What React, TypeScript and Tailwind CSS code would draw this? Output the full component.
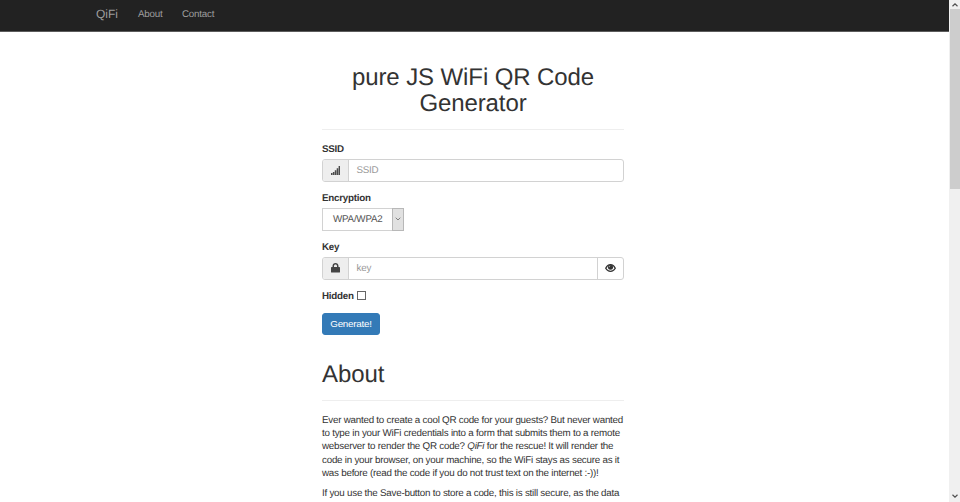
import React from "react";

const Signal = () => (
  <svg viewBox="0 0 9 9" className="h-[9px] w-[9px]" fill="#4a4a4a">
    <path d="M0 7h1.500v2H0zM1.900 6h1.500v3H1.900zM3.800 4.300h1.500v4.700H3.800zM5.700 2.300h1.500v6.700H5.700zM7.600 0H9v9H7.600z" />
  </svg>
);

const Lock = () => (
  <svg viewBox="0 0 9 10" className="h-[10px] w-[9px]" fill="#444">
    <path
      fillRule="evenodd"
      d="M1.500 4V3.100C1.500 1.200 2.800.1 4.500.1s3 1.100 3 3V4h.8c.4 0 .7.3.7.700v4.200c0 .3-.3.600-.6.600H.6C.3 9.500 0 9.200 0 8.900V4.700C0 4.300.3 4 .7 4zM3 4h3V3.200C6 2.200 5.400 1.600 4.500 1.600S3 2.200 3 3.200z"
    />
  </svg>
);

const Eye = () => (
  <svg viewBox="0 0 16 12" className="h-[8px] w-[11px]">
    <path d="M.8 6.300C2.400 3 5 1.100 8 1.100s5.600 1.900 7.200 5.200C13.400 9.400 11 11 8 11S2.600 9.400.8 6.300z" fill="#fff" stroke="#333" strokeWidth="1.900" />
    <circle cx="8" cy="5" r="3.800" fill="#333" />
    <path d="M6 4.800c0-1.100.6-1.800 1.600-1.900" fill="none" stroke="#ddd" strokeWidth="1" />
  </svg>
);

const Label = ({ children }: { children: React.ReactNode }) => (
  <div className="h-[13.33px] font-bold leading-[13.33px]">{children}</div>
);

export default function App() {
  return (
    <div className="flex h-[502px] overflow-hidden bg-white font-['Liberation_Sans',Arial,sans-serif] text-[9.8px] leading-[13.33px] tracking-[-0.235px] text-[#333] [text-rendering:geometricPrecision]">
      <div className="flex min-w-0 flex-1 flex-col">
        <nav className="flex h-[32px] shrink-0 items-center border-b border-[#5c5c5c] bg-[#222] pb-[2px] pl-[96px] text-[#9d9d9d]">
          <span className="w-[42px] text-[12px] tracking-normal">QiFi</span>
          <span className="w-[44px]">About</span>
          <span>Contact</span>
        </nav>
        <main className="ml-[322px] w-[302px] whitespace-nowrap pt-[33px]">
          <h1 className="h-[65px] border-b border-[#eee] text-center text-[24px] leading-[26.4px] tracking-[-0.1px]">
            pure JS WiFi QR Code
            <br />
            Generator
          </h1>
          <div className="pt-[12.67px]">
            <Label>SSID</Label>
            <div className="mt-[3px] flex h-[23px] overflow-hidden rounded-[3px] border border-[#d2d2d2]">
              <span className="flex w-[26px] items-center justify-center border-r border-[#d2d2d2] bg-[#eee]"><Signal /></span>
              <span className="flex items-center pl-[7.5px] text-[#999]">SSID</span>
            </div>
          </div>
          <div className="pt-[10px]">
            <Label>Encryption</Label>
            <div className="mt-[2.67px] flex h-[23px] w-[82px] border border-[#d2d2d2] text-[#555]">
              <span className="flex flex-1 items-center pl-[10px]">WPA/WPA2</span>
              <span className="-my-px -mr-px flex w-[12px] items-center justify-center border border-[#b8b8b8] bg-[#e1e1e1]">
                <svg viewBox="0 0 6 4" className="h-[4px] w-[6px]" fill="none" stroke="#666" strokeWidth=".8"><path d="M.7.7 3 3 5.300.7" /></svg>
              </span>
            </div>
          </div>
          <div className="pt-[10px]">
            <Label>Key</Label>
            <div className="mt-[2.67px] flex h-[23px] overflow-hidden rounded-[3px] border border-[#d2d2d2]">
              <span className="flex w-[26px] items-center justify-center border-r border-[#d2d2d2] bg-[#eee]"><Lock /></span>
              <span className="flex flex-1 items-center pl-[7.5px] text-[#999]">key</span>
              <span className="flex w-[26px] items-center justify-center border-l border-[#d2d2d2]"><Eye /></span>
            </div>
          </div>
          <div className="mt-[10px] flex h-[13px] items-center gap-[3px] font-bold">
            Hidden <span className="mb-[2px] h-[9px] w-[9px] border border-[#666] bg-white" />
          </div>
          <button className="mt-[10px] flex h-[22px] w-[58px] items-center justify-center rounded-[3px] border border-[#337ab7] bg-[#337ab7] text-white">
            Generate!
          </button>
          <h1 className="mt-[27.33px] h-[38.67px] border-b border-[#eee] text-[24px] leading-[26.4px] tracking-[-0.1px]">About</h1>
          <p className="mt-[12.67px]">
            Ever wanted to create a cool QR code for your guests? But never wanted<br />
            to type in your WiFi credentials into a form that submits them to a remote<br />
            webserver to render the QR code? <em>QiFi</em> for the rescue! It will render the<br />
            code in your browser, on your machine, so the WiFi stays as secure as it<br />
            was before (read the code if you do not trust text on the internet :-))!
          </p>
          <p className="mt-[6.33px]">If you use the Save-button to store a code, this is still secure, as the data</p>
        </main>
      </div>
      <div className="flex w-[11px] shrink-0 flex-col items-center bg-[#f0f0f0]">
        <div className="flex h-[9px] items-center">
          <svg viewBox="0 0 6 4" className="h-[4px] w-[6px]" fill="none" stroke="#505050" strokeWidth="1.200"><path d="M.5 3.300 3 .9l2.500 2.400" /></svg>
        </div>
        <div className="h-[180px] w-[10px] bg-[#cdcdcd]" />
        <div className="mt-auto flex h-[12px] items-center">
          <svg viewBox="0 0 6 4" className="h-[4px] w-[6px]" fill="none" stroke="#505050" strokeWidth="1.200"><path d="M.5.7 3 3.100 5.500.7" /></svg>
        </div>
      </div>
    </div>
  );
}
